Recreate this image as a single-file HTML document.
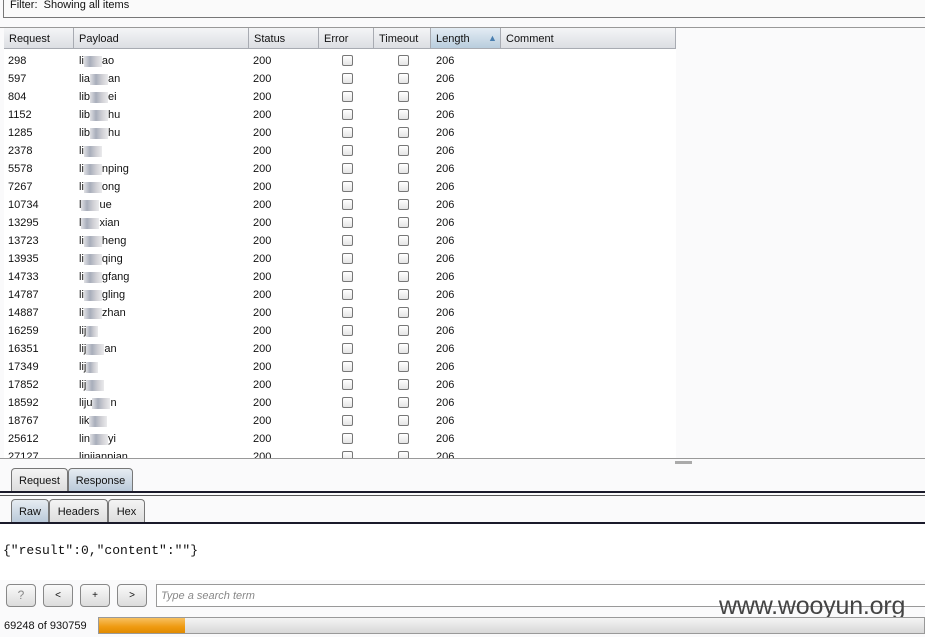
<!DOCTYPE html>
<html><head><meta charset="utf-8"><style>
*{margin:0;padding:0;box-sizing:border-box}
body{width:925px;height:637px;background:#fafafb;font-family:"Liberation Sans",Arial,sans-serif;font-size:11px;color:#111;position:relative;overflow:hidden}
.a{position:absolute}
.hdr{position:absolute;top:28px;height:21px;background:linear-gradient(#f4f5f7,#dcdee3);border-right:1px solid #a8abb2;border-bottom:1px solid #a8abb2;padding:5px 0 0 5px}
.row{position:absolute;left:4px;width:672px;height:18px}
.row span{position:absolute;top:4px;line-height:12px;white-space:nowrap}
.cb{position:absolute;top:4px;width:11px;height:11px;border:1px solid #777;border-radius:2px;background:linear-gradient(#fff,#e4e4e4)}
.bl{display:inline-block;width:18px;height:11px;vertical-align:top;margin-top:1px;background:linear-gradient(90deg,#e0e0e4,#a8aebb,#cfcfd4,#eaeaec)}
.tab{position:absolute;height:24px;border:1px solid #777;border-bottom:none;border-radius:4px 4px 0 0;background:linear-gradient(#f4f4f4,#dcdcdc);padding:6px 0 0 0;text-align:center}
.tab.sel{background:linear-gradient(#e6ecf2,#b8c8d8)}
.btn{position:absolute;top:584px;width:30px;height:23px;border:1px solid #888;border-radius:4px;background:linear-gradient(#fafafa,#dcdcdc);text-align:center;padding-top:5px;font-size:10px}
</style></head><body>
<div class="a" style="left:3px;top:0;width:922px;height:18px;border-left:1px solid #777;border-bottom:1px solid #777;background:#fafafa;padding:0 0 0 6px;line-height:10px">Filter:&nbsp; Showing all items</div>
<div class="a" style="left:0;top:27px;width:925px;height:1px;background:#999"></div>
<div class="a" style="left:4px;top:28px;width:672px;height:430px;background:#fff"></div>
<div class="hdr" style="left:4px;width:70px">Request</div>
<div class="hdr" style="left:74px;width:175px">Payload</div>
<div class="hdr" style="left:249px;width:70px">Status</div>
<div class="hdr" style="left:319px;width:55px">Error</div>
<div class="hdr" style="left:374px;width:57px">Timeout</div>
<div class="hdr" style="left:431px;width:70px;background:linear-gradient(#e3ecf4,#b9cddd)">Length<span style="position:absolute;left:57px;top:5px;color:#4a7fb0;font-size:9px">▲</span></div>
<div class="hdr" style="left:501px;width:175px">Comment</div>

<div class="row" style="top:51px"><span style="left:4px">298</span><span style="left:75px">li<i class="bl"></i>ao</span><span style="left:249px">200</span><i class="cb" style="left:338px"></i><i class="cb" style="left:394px"></i><span style="left:432px">206</span></div>
<div class="row" style="top:69px"><span style="left:4px">597</span><span style="left:75px">lia<i class="bl"></i>an</span><span style="left:249px">200</span><i class="cb" style="left:338px"></i><i class="cb" style="left:394px"></i><span style="left:432px">206</span></div>
<div class="row" style="top:87px"><span style="left:4px">804</span><span style="left:75px">lib<i class="bl"></i>ei</span><span style="left:249px">200</span><i class="cb" style="left:338px"></i><i class="cb" style="left:394px"></i><span style="left:432px">206</span></div>
<div class="row" style="top:105px"><span style="left:4px">1152</span><span style="left:75px">lib<i class="bl"></i>hu</span><span style="left:249px">200</span><i class="cb" style="left:338px"></i><i class="cb" style="left:394px"></i><span style="left:432px">206</span></div>
<div class="row" style="top:123px"><span style="left:4px">1285</span><span style="left:75px">lib<i class="bl"></i>hu</span><span style="left:249px">200</span><i class="cb" style="left:338px"></i><i class="cb" style="left:394px"></i><span style="left:432px">206</span></div>
<div class="row" style="top:141px"><span style="left:4px">2378</span><span style="left:75px">li<i class="bl"></i></span><span style="left:249px">200</span><i class="cb" style="left:338px"></i><i class="cb" style="left:394px"></i><span style="left:432px">206</span></div>
<div class="row" style="top:159px"><span style="left:4px">5578</span><span style="left:75px">li<i class="bl"></i>nping</span><span style="left:249px">200</span><i class="cb" style="left:338px"></i><i class="cb" style="left:394px"></i><span style="left:432px">206</span></div>
<div class="row" style="top:177px"><span style="left:4px">7267</span><span style="left:75px">li<i class="bl"></i>ong</span><span style="left:249px">200</span><i class="cb" style="left:338px"></i><i class="cb" style="left:394px"></i><span style="left:432px">206</span></div>
<div class="row" style="top:195px"><span style="left:4px">10734</span><span style="left:75px">l<i class="bl"></i>ue</span><span style="left:249px">200</span><i class="cb" style="left:338px"></i><i class="cb" style="left:394px"></i><span style="left:432px">206</span></div>
<div class="row" style="top:213px"><span style="left:4px">13295</span><span style="left:75px">l<i class="bl"></i>xian</span><span style="left:249px">200</span><i class="cb" style="left:338px"></i><i class="cb" style="left:394px"></i><span style="left:432px">206</span></div>
<div class="row" style="top:231px"><span style="left:4px">13723</span><span style="left:75px">li<i class="bl"></i>heng</span><span style="left:249px">200</span><i class="cb" style="left:338px"></i><i class="cb" style="left:394px"></i><span style="left:432px">206</span></div>
<div class="row" style="top:249px"><span style="left:4px">13935</span><span style="left:75px">li<i class="bl"></i>qing</span><span style="left:249px">200</span><i class="cb" style="left:338px"></i><i class="cb" style="left:394px"></i><span style="left:432px">206</span></div>
<div class="row" style="top:267px"><span style="left:4px">14733</span><span style="left:75px">li<i class="bl"></i>gfang</span><span style="left:249px">200</span><i class="cb" style="left:338px"></i><i class="cb" style="left:394px"></i><span style="left:432px">206</span></div>
<div class="row" style="top:285px"><span style="left:4px">14787</span><span style="left:75px">li<i class="bl"></i>gling</span><span style="left:249px">200</span><i class="cb" style="left:338px"></i><i class="cb" style="left:394px"></i><span style="left:432px">206</span></div>
<div class="row" style="top:303px"><span style="left:4px">14887</span><span style="left:75px">li<i class="bl"></i>zhan</span><span style="left:249px">200</span><i class="cb" style="left:338px"></i><i class="cb" style="left:394px"></i><span style="left:432px">206</span></div>
<div class="row" style="top:321px"><span style="left:4px">16259</span><span style="left:75px">lij<i class="bl" style="width:12px"></i></span><span style="left:249px">200</span><i class="cb" style="left:338px"></i><i class="cb" style="left:394px"></i><span style="left:432px">206</span></div>
<div class="row" style="top:339px"><span style="left:4px">16351</span><span style="left:75px">lij<i class="bl"></i>an</span><span style="left:249px">200</span><i class="cb" style="left:338px"></i><i class="cb" style="left:394px"></i><span style="left:432px">206</span></div>
<div class="row" style="top:357px"><span style="left:4px">17349</span><span style="left:75px">lij<i class="bl" style="width:12px"></i></span><span style="left:249px">200</span><i class="cb" style="left:338px"></i><i class="cb" style="left:394px"></i><span style="left:432px">206</span></div>
<div class="row" style="top:375px"><span style="left:4px">17852</span><span style="left:75px">lij<i class="bl"></i></span><span style="left:249px">200</span><i class="cb" style="left:338px"></i><i class="cb" style="left:394px"></i><span style="left:432px">206</span></div>
<div class="row" style="top:393px"><span style="left:4px">18592</span><span style="left:75px">liju<i class="bl"></i>n</span><span style="left:249px">200</span><i class="cb" style="left:338px"></i><i class="cb" style="left:394px"></i><span style="left:432px">206</span></div>
<div class="row" style="top:411px"><span style="left:4px">18767</span><span style="left:75px">lik<i class="bl"></i></span><span style="left:249px">200</span><i class="cb" style="left:338px"></i><i class="cb" style="left:394px"></i><span style="left:432px">206</span></div>
<div class="row" style="top:429px"><span style="left:4px">25612</span><span style="left:75px">lin<i class="bl"></i>yi</span><span style="left:249px">200</span><i class="cb" style="left:338px"></i><i class="cb" style="left:394px"></i><span style="left:432px">206</span></div>
<div class="row" style="top:447px;height:11px;overflow:hidden"><span style="left:4px">27127</span><span style="left:75px">linjianpian</span><span style="left:249px">200</span><i class="cb" style="left:338px"></i><i class="cb" style="left:394px"></i><span style="left:432px">206</span></div>
<div class="a" style="left:0;top:458px;width:925px;height:1px;background:#999"></div>
<div class="a" style="left:675px;top:461px;width:17px;height:3px;background:#aaa"></div>

<div class="tab" style="left:11px;top:468px;width:57px">Request</div>
<div class="tab sel" style="left:68px;top:468px;width:65px">Response</div>
<div class="a" style="left:0;top:491px;width:925px;height:2px;background:#1a1a2a"></div>
<div class="a" style="left:0;top:495px;width:925px;height:1px;background:#555"></div>
<div class="tab sel" style="left:11px;top:499px;width:38px">Raw</div>
<div class="tab" style="left:49px;top:499px;width:59px">Headers</div>
<div class="tab" style="left:108px;top:499px;width:37px">Hex</div>
<div class="a" style="left:0;top:522px;width:925px;height:2px;background:#1a1a2a"></div>
<div class="a" style="left:0;top:524px;width:925px;height:56px;background:#fff"></div>
<div class="a" style="left:3px;top:543px;font-family:'Liberation Mono',monospace;font-size:13px">{"result":0,"content":""}</div>

<div class="btn" style="left:6px;color:#888;font-size:12px;padding-top:3px">?</div>
<div class="btn" style="left:43px">&lt;</div>
<div class="btn" style="left:80px">+</div>
<div class="btn" style="left:117px">&gt;</div>
<div class="a" style="left:156px;top:584px;width:769px;height:23px;background:#fff;border:1px solid #999;border-right:none;padding:5px 0 0 4px;color:#888;font-style:italic">Type a search term</div>
<div class="a" style="left:719px;top:592px;font-size:25px;color:#444;letter-spacing:-0.2px">www.wooyun.org</div>
<div class="a" style="left:4px;top:620px;font-size:11px">69248 of 930759</div>
<div class="a" style="left:98px;top:617px;width:827px;height:17px;border:1px solid #999;background:linear-gradient(#f4f4f4,#d8d8d8)"></div>
<div class="a" style="left:99px;top:618px;width:86px;height:15px;background:linear-gradient(#f8c060,#ef9a10 60%,#e08a00)"></div>
</body></html>
